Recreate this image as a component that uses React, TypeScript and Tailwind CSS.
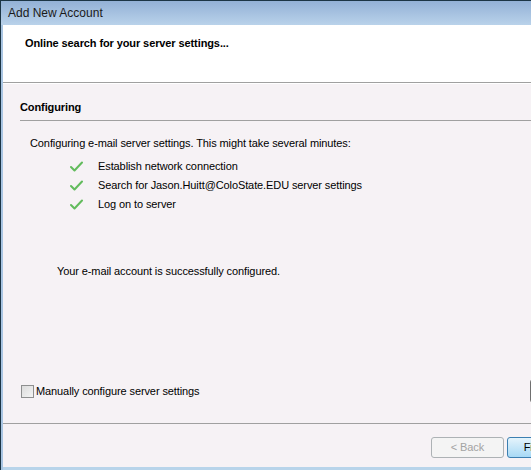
const body = { fontFamily: '"Liberation Sans", Arial, sans-serif' };

const steps = [
  "Establish network connection",
  "Search for Jason.Huitt@ColoState.EDU server settings",
  "Log on to server",
];

function Check() {
  return (
    <svg width="13" height="11" viewBox="0 0 13 11" className="shrink-0">
      <path d="M1 6 L4.5 9.5 L12 1.5" fill="none" stroke="#62bb5c" strokeWidth="2" strokeLinejoin="round" strokeLinecap="round" />
    </svg>
  );
}

export default function App() {
  return (
    <div className="w-[531px] h-[470px] overflow-hidden bg-[#1c3545] text-black text-[11px] tracking-[-0.1px]" style={body}>
      <div className="w-[640px] h-[469px] mt-px ml-px bg-[#a9c5e2] flex flex-col">
        {/* title bar */}
        <div className="h-[24px] flex items-center pl-[7px] bg-gradient-to-b from-[#93b1d6] to-[#b9d2ea] text-[12px] tracking-normal text-[#1a1a1a]">
          Add New Account
        </div>

        <div className="ml-[2px] flex-1 flex flex-col">
          {/* header */}
          <div className="h-[58px] bg-white border-b border-[#a0a0a0] pl-[22px] pt-[11px]">
            <div className="font-bold leading-[14px]">Online search for your server settings...</div>
          </div>

          {/* body */}
          <div className="flex-1 bg-[#f6f2f5] border-t border-white flex flex-col">
            <div className="pl-[17px] pt-[16px]">
              <div className="font-bold leading-[14px]">Configuring</div>
              <div className="mt-[6px] border-t border-[#a0a0a0]" />
              <div className="pl-[10px] mt-[15px] leading-[14px]">
                Configuring e-mail server settings. This might take several minutes:
              </div>
              <div className="pl-[50px] mt-[7px] flex flex-col">
                {steps.map((s) => (
                  <div key={s} className="h-[19px] flex items-center gap-[15px]">
                    <Check />
                    <span>{s}</span>
                  </div>
                ))}
              </div>
              <div className="pl-[37px] mt-[50px] leading-[14px]">Your e-mail account is successfully configured.</div>
            </div>

            <div className="mt-[100px] h-[26px] flex items-center pl-[18px]">
              <div className="w-[13px] h-[13px] border border-[#8e8f8f] bg-gradient-to-br from-[#dcdcdc] to-[#f4f4f4]" />
              <span className="ml-[2px]">Manually configure server settings</span>
              <div className="ml-[330px] w-[90px] h-[24px] rounded-[3px] border border-[#707070] bg-gradient-to-b from-[#f2f2f2] to-[#dcdcdc]" />
            </div>

            <div className="mt-[19px] border-t border-[#a0a0a0]" />
            <div className="flex-1 flex items-start pt-[13px] pl-[428px] gap-[3px]">
              <div className="w-[73px] h-[21px] rounded-[3px] border border-[#adb2b5] bg-[#f4f4f4] text-[#a3a3a3] flex items-center justify-center">
                &lt; Back
              </div>
              <div className="w-[62px] h-[21px] rounded-[3px] border border-[#3c7fb1] bg-gradient-to-b from-[#e5f4fc] to-[#a7d9f5] flex items-center justify-center">
                Finish
              </div>
            </div>
            <div className="h-[3px] bg-[#b8d4ea]" />
          </div>
        </div>
      </div>
    </div>
  );
}
